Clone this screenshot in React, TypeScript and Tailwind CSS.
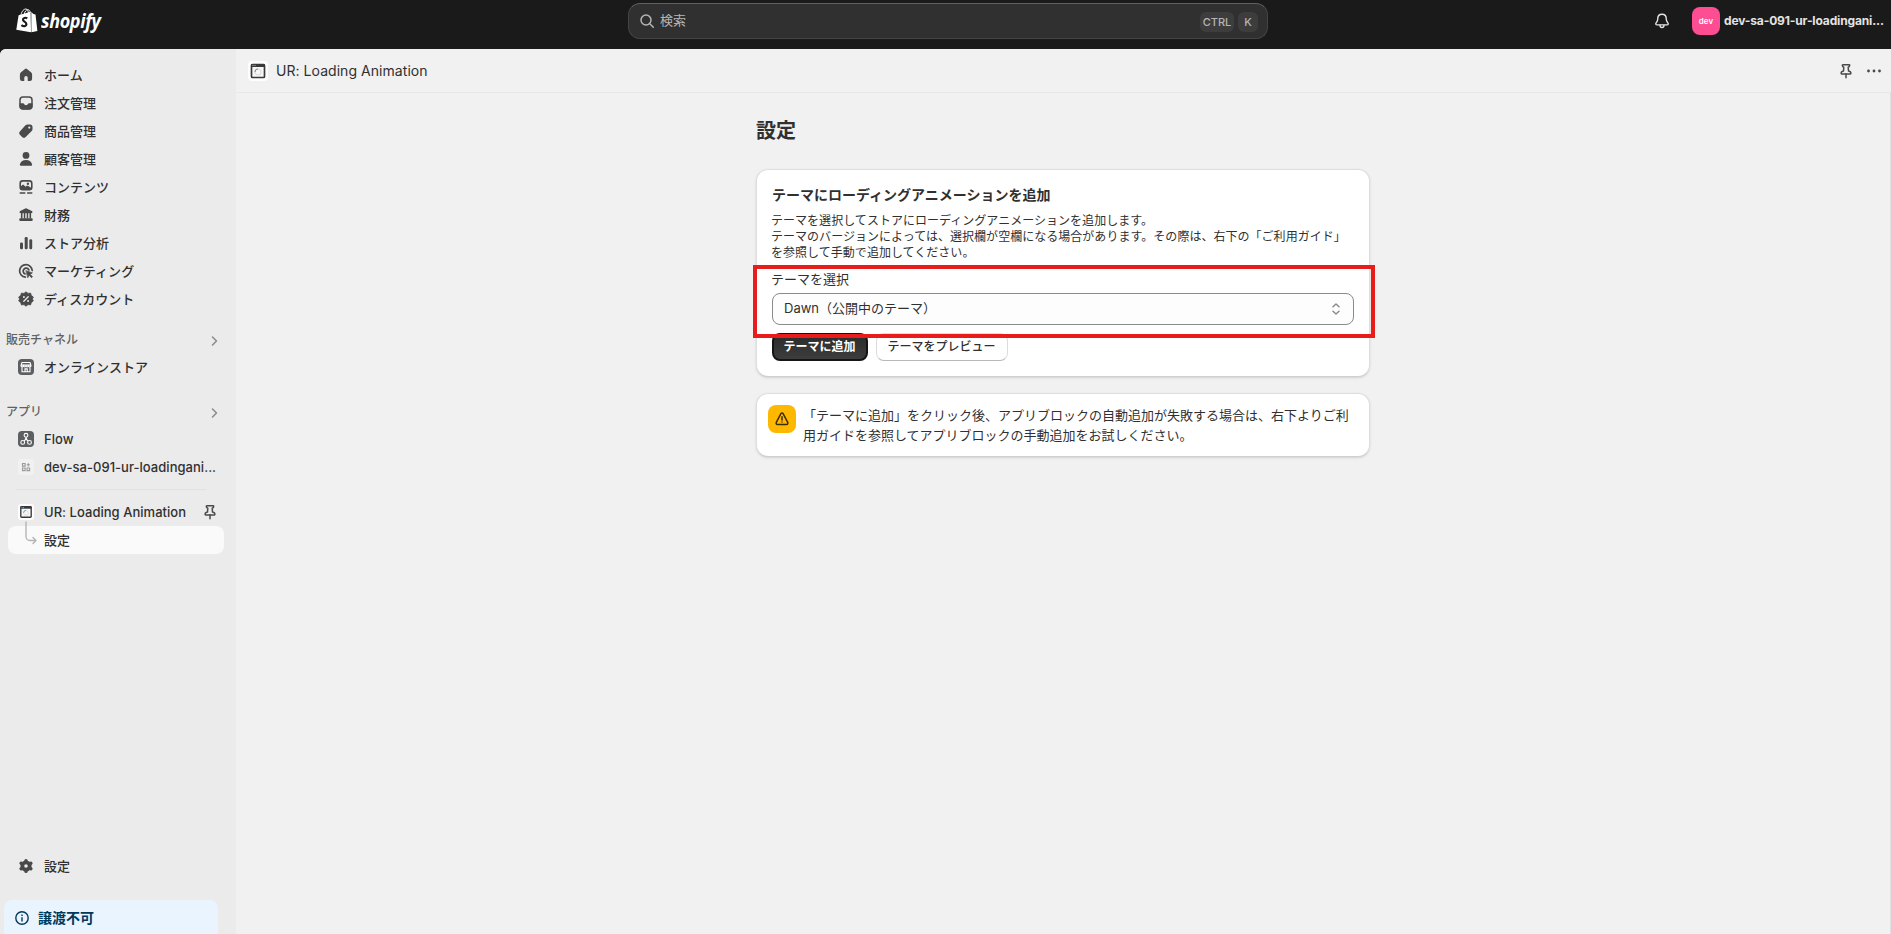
import type { ReactNode } from "react";

type NavItemProps = {
    icon: ReactNode;
    label: string;
    trailing?: ReactNode;
};

type SectionLabelProps = {
    label: string;
    className?: string;
};

const HomeIcon = () => (
    <svg viewBox="0 0 16 16" className="size-4" fill="#4a4a4a">
        <path d="M7 1.9a1.6 1.6 0 0 1 2 0l4 3.3c.7.6 1.1 1.4 1.1 2.300v4.300a2.200 2.200 0 0 1-2.200 2.200h-1.600a.6.6 0 0 1-.6-.6v-2.600a1.700 1.700 0 0 0-3.400 0v2.600a.6.6 0 0 1-.6.6H4.100a2.200 2.200 0 0 1-2.200-2.200V7.500c0-.9.4-1.700 1.100-2.300z" />
    </svg>
);

const OrdersIcon = () => (
    <svg viewBox="0 0 16 16" className="size-4">
        <rect x="2" y="2" width="12" height="12" rx="3" fill="none" stroke="#4a4a4a" strokeWidth="1.500" />
        <path d="M1.500 8.300h3.600c.5 0 .8.300 1 .7.300.7 1 1.200 1.900 1.200s1.600-.5 1.900-1.200c.2-.4.500-.7 1-.7h3.600V11a3.400 3.400 0 0 1-3.400 3.400H4.900A3.400 3.400 0 0 1 1.500 11z" fill="#4a4a4a" />
    </svg>
);

const TagIcon = () => (
    <svg viewBox="0 0 16 16" className="size-4" fill="#4a4a4a" fillRule="evenodd">
        <path d="M7.700 2.100c.5-.5 1.100-.7 1.800-.7h2.700c1.300 0 2.300 1 2.300 2.300v2.500c0 .7-.3 1.300-.8 1.800l-6 5.900a2.600 2.600 0 0 1-3.600 0l-2-2a2.600 2.600 0 0 1 0-3.700zM11.300 5.700a1.100 1.100 0 1 0 0-2.200 1.100 1.100 0 0 0 0 2.200z" />
    </svg>
);

const CustomerIcon = () => (
    <svg viewBox="0 0 16 16" className="size-4" fill="#4a4a4a">
        <circle cx="8" cy="4.400" r="3.400" />
        <path d="M1.900 13.200C2.600 10.500 5 9 8 9s5.400 1.500 6.100 4.200c.2.800-.3 1.500-1.100 1.500H3c-.8 0-1.300-.7-1.100-1.500z" />
    </svg>
);

const ContentIcon = () => (
    <svg viewBox="0 0 16 16" className="size-4">
        <rect x="2.200" y="1.900" width="11.600" height="8.900" rx="2.500" fill="none" stroke="#4a4a4a" strokeWidth="1.600" />
        <path d="M2.200 7.800l1.900-1.600c.6-.5 1.400-.5 1.900 0l1.700 1.500.7-.6c.6-.5 1.400-.5 2 0l3.400 2.100-1.500 1.800H3.700L2.200 9.500z" fill="#4a4a4a" />
        <circle cx="9.900" cy="4.800" r="1.200" fill="#4a4a4a" />
        <path d="M2.200 13.900h4.600M9.600 13.900h4.200" stroke="#4a4a4a" strokeWidth="1.500" strokeLinecap="round" />
    </svg>
);

const FinanceIcon = () => (
    <svg viewBox="0 0 16 16" className="size-4" fill="#4a4a4a">
        <path d="M7.300 1.400a1.500 1.500 0 0 1 1.400 0l5.100 2.500c.4.200.7.600.7 1.100 0 .7-.5 1.200-1.200 1.200H2.700c-.7 0-1.200-.5-1.200-1.200 0-.5.300-.9.700-1.100z" />
        <path d="M2.900 6h1.600v5.500H2.900zM5.800 6h1.500v5.500H5.800zM8.700 6h1.500v5.500H8.700zM11.500 6h1.600v5.500h-1.600z" />
        <rect x="1.300" y="11.300" width="13.400" height="2.600" rx="1" />
    </svg>
);

const AnalyticsIcon = () => (
    <svg viewBox="0 0 16 16" className="size-4" fill="#4a4a4a">
        <rect x="2" y="7.500" width="3" height="6.700" rx="1.200" />
        <rect x="6.700" y="2" width="3" height="12.200" rx="1.200" />
        <rect x="11.300" y="4.300" width="2.900" height="9.900" rx="1.200" />
    </svg>
);

const MarketingIcon = () => (
    <svg viewBox="0 0 16 16" className="size-4" fill="none" stroke="#4a4a4a" strokeWidth="1.700" strokeLinecap="round">
        <path d="M14.200 7.500A6.300 6.300 0 1 0 7.300 14.200" />
        <path d="M10.900 6.900A3 3 0 1 0 7 10.900" />
        <path d="M8.200 7.700l6.200 2.200-2.300 1.300 2.400 2.500-1 1-2.400-2.400-1.200 2.200z" fill="#4a4a4a" strokeWidth=".7" strokeLinejoin="round" />
    </svg>
);

const DiscountIcon = () => (
    <svg viewBox="0 0 16 16" className="size-4">
        <path d="M8 .8l2 1.600 2.600-.3.700 2.400 2 1.500L14.400 8l.9 2-2 1.500-.7 2.400-2.600-.3-2 1.600-2-1.600-2.600.3-.7-2.400-2-1.500.9-2-.9-2 2-1.500.7-2.400 2.600.3z" fill="#4a4a4a" stroke="#4a4a4a" strokeWidth=".8" strokeLinejoin="round" />
        <path d="M10.200 5.800l-4.400 4.400" stroke="#ebebeb" strokeWidth="1.300" strokeLinecap="round" />
        <circle cx="5.900" cy="6" r=".95" fill="#ebebeb" />
        <circle cx="10.100" cy="10" r=".95" fill="#ebebeb" />
    </svg>
);

const StoreIcon = () => (
    <svg viewBox="0 0 16 16" className="size-4">
        <rect width="16" height="16" rx="4" fill="#5c5f62" />
        <path d="M4 3.500h8l1 3.200c0 1.400-2.200 1.600-2.600.2-.4 1.400-2.100 1.400-2.400 0-.4 1.400-2.100 1.400-2.400 0C5.100 8.300 3 8.100 3 6.700zM4 8.400v4.300h8V8.400M7 12.500v-2.600h2.200v2.600M3.400 6.100h9.200" fill="none" stroke="#fff" strokeWidth="1.100" />
    </svg>
);

const FlowIcon = () => (
    <svg viewBox="0 0 16 16" className="size-4">
        <rect width="16" height="16" rx="4" fill="#5c5f62" />
        <g fill="none" stroke="#fff" strokeWidth="1.100">
            <circle cx="8" cy="4.300" r="1.900" />
            <circle cx="4.700" cy="11.400" r="1.900" />
            <circle cx="11.500" cy="11.400" r="1.900" />
            <path d="M7.900 6.200c0 1.800-.4 2.700-1.800 3.800M8.100 6.200c0 1.800.5 2.700 1.900 3.800" />
        </g>
    </svg>
);

const DevAppIcon = () => (
    <svg viewBox="0 0 16 16" className="size-4">
        <rect width="16" height="16" rx="3" fill="#f1f1f1" />
        <g fill="none" stroke="#9a9a9a" strokeWidth="1.100">
            <path d="M4.500 4.500h2.600v2.600H4.500zM4.500 9h2.600v2.600H4.500zM9 9h2.600v2.600H9zM8.700 5.800h3.200M10.300 4.200v3.200" />
        </g>
    </svg>
);

const WindowIcon = ({ className }: { className: string }) => (
    <svg viewBox="0 0 20 20" className={className}>
        <rect width="20" height="20" rx="4" fill="#fdfdfd" />
        <rect x="3.500" y="3.500" width="13" height="13" rx="1" fill="#f7f7f7" stroke="#3a3a3a" strokeWidth="1.700" />
        <path d="M3 4.600h14" stroke="#3a3a3a" strokeWidth="2.600" />
        <path d="M4.500 4.400h1M6.500 4.400h1" stroke="#ddd" strokeWidth=".8" />
        <circle cx="10" cy="11" r="3" fill="none" stroke="#ddd" strokeWidth="1.200" />
        <path d="M7 11a3 3 0 0 1 3-3" fill="none" stroke="#4aa8dc" strokeWidth="1.200" />
    </svg>
);

const PinIcon = () => (
    <svg viewBox="0 0 16 16" className="size-4" fill="none" stroke="#4a4a4a" strokeWidth="1.500" strokeLinecap="round" strokeLinejoin="round">
        <path d="M4.800 1.700h6.400c.3 0 .5.300.5.600 0 1-.6 1.700-1.500 2l.3 3.600c1.400.3 2.400 1.200 2.400 2.400 0 .4-.3.600-.6.600H3.700c-.3 0-.6-.2-.6-.6 0-1.200 1-2.100 2.400-2.400l.3-3.600c-.9-.3-1.500-1-1.500-2 0-.3.200-.6.500-.6z" />
        <path d="M8 11v3.800" />
    </svg>
);

const GearIcon = () => (
    <svg viewBox="0 0 16 16" className="size-4">
        <circle cx="8" cy="8" r="3.700" fill="none" stroke="#4a4a4a" strokeWidth="3.800" />
        <g stroke="#4a4a4a" strokeWidth="3.400" strokeLinecap="round">
            <path d="M8 2.600v1.300M8 12.100v1.300M3.100 5.200l1.300.7M11.600 10.100l1.300.7M3.100 10.800l1.300-.7M11.600 5.900l1.300-.7" />
        </g>
    </svg>
);

const ChevronIcon = () => (
    <svg viewBox="0 0 8 12" className="w-2 h-3" fill="none" stroke="#8a8a8a" strokeWidth="1.500" strokeLinecap="round" strokeLinejoin="round">
        <path d="M1.500 2l4 4-4 4" />
    </svg>
);

const ShopifyLogo = () => (
    <div className="flex items-center gap-[3px]">
        <svg viewBox="0 0 22 25" className="w-[22px] h-[25px]">
            <path d="M2.600 7.300L14.600 3.700l.4 20.600L.3 21.800z" fill="#fff" />
            <path d="M15.300 4l2.100 2.100 2.100.3 1.900 16.500-6 1.400z" fill="#fff" />
            <path d="M5 6.800C5.900 3 8 .9 9.900 1c1.500.1 2.400 2 2.500 4.200M8.300 6c.5-2.400 1.900-4.200 3.500-4.300 1.500 0 2.300 1.500 2.500 2.800" fill="none" stroke="#fff" strokeWidth="1" />
            <path d="M11.300 10.200c-2-.9-4.300-.3-4.300 1.500 0 2 3.400 2 3.400 4.500 0 2.300-2.700 2.700-5 1" fill="none" stroke="#1a1a1a" strokeWidth="2.200" />
        </svg>
        <span className="inline-block origin-left scale-x-[0.900] font-['Open_Sans',sans-serif] text-[20px] leading-6 font-bold italic tracking-[-0.4px] text-white">
            shopify
        </span>
    </div>
);

const NavItem = ({ icon, label, trailing }: NavItemProps) => (
    <li className="flex h-7 items-center pl-[18px] pr-2.5">
        {icon}
        <span className="ml-2.5 flex-1 whitespace-nowrap pt-0.5 font-medium tracking-[0.03px]">{label}</span>
        {trailing}
    </li>
);

const SectionLabel = ({ label, className }: SectionLabelProps) => (
    <div className={`flex h-7 items-center justify-between pl-1.5 pr-[17px] ${className ?? ""}`}>
        <span className="pb-[3px] text-[12px] font-medium text-[#616161]">{label}</span>
        <ChevronIcon />
    </div>
);

const mainNav: NavItemProps[] = [
    { label: "ホーム", icon: <HomeIcon /> },
    { label: "注文管理", icon: <OrdersIcon /> },
    { label: "商品管理", icon: <TagIcon /> },
    { label: "顧客管理", icon: <CustomerIcon /> },
    { label: "コンテンツ", icon: <ContentIcon /> },
    { label: "財務", icon: <FinanceIcon /> },
    { label: "ストア分析", icon: <AnalyticsIcon /> },
    { label: "マーケティング", icon: <MarketingIcon /> },
    { label: "ディスカウント", icon: <DiscountIcon /> },
];

const TopBar = () => (
    <header className="grid h-[49px] shrink-0 grid-cols-[628px_640px_1fr] bg-[#1a1a1a]">
        <div className="pl-4 pt-2">
            <ShopifyLogo />
        </div>
        <div className="mt-[3px] flex h-9 items-center rounded-xl border border-[#444] border-t-[#616161] bg-[#303030] pl-2 pr-[9px]">
            <svg viewBox="0 0 16 16" className="ml-0.5 size-4" fill="none" stroke="#b5b5b5" strokeWidth="1.500" strokeLinecap="round">
                <circle cx="7" cy="7" r="5" />
                <path d="M10.800 10.800l3.500 3.500" />
            </svg>
            <span className="ml-[5px] flex-1 text-[13px] text-[#b5b5b5]">検索</span>
            <kbd className="mt-0.5 flex h-5 w-[34px] items-center justify-center rounded-md bg-[#3d3d3d] font-[Inter,sans-serif] text-[11px] font-medium text-[#b5b5b5]">
                CTRL
            </kbd>
            <kbd className="ml-1 mt-0.5 flex h-5 w-5 items-center justify-center rounded-md bg-[#3d3d3d] font-[Inter,sans-serif] text-[11px] font-medium text-[#b5b5b5]">
                K
            </kbd>
        </div>
        <div className="flex h-[42px] items-center justify-end pr-2">
            <svg viewBox="0 0 16 16" className="mr-[22px] size-4" fill="none" stroke="#e3e3e3" strokeWidth="1.400" strokeLinecap="round" strokeLinejoin="round">
                <path d="M8 1.200c-2.500 0-4.200 1.900-4.200 4.300 0 2-.5 3-1.400 3.900-1.100 1.100-.8 2.500.7 2.500h9.800c1.500 0 1.800-1.400.7-2.500-.9-.9-1.400-1.900-1.400-3.900 0-2.400-1.700-4.300-4.200-4.300z" />
                <path d="M6 12.200c0 3 4 3 4 0" />
            </svg>
            <div className="flex size-7 items-center justify-center rounded-lg bg-[#ff4d94] text-[8px] font-semibold text-white">dev</div>
            <span className="ml-1 w-[159px] whitespace-nowrap text-[12px] font-bold tracking-[-0.14px] text-[#e3e3e3]">dev-sa-091-ur-loadingani...</span>
        </div>
    </header>
);

const Sidebar = () => (
    <nav className="flex w-[236px] shrink-0 flex-col bg-[#ebebeb] pt-3 text-[13px] text-[#303030]">
        <ul>
            {mainNav.map(item => (
                <NavItem key={item.label} {...item} />
            ))}
        </ul>
        <SectionLabel label="販売チャネル" className="mt-[14px]" />
        <ul className="-mt-0.5">
            <NavItem icon={<StoreIcon />} label="オンラインストア" />
        </ul>
        <SectionLabel label="アプリ" className="mt-[18px]" />
        <ul className="-mt-0.5">
            <NavItem icon={<FlowIcon />} label="Flow" />
            <NavItem icon={<DevAppIcon />} label="dev-sa-091-ur-loadingani..." />
        </ul>
        <hr className="ml-4 mr-[30px] mt-2 mb-2 border-[#e1e1e1]" />
        <div className="relative">
            <NavItem icon={<WindowIcon className="size-4" />} label="UR: Loading Animation" trailing={<div className="mr-2"><PinIcon /></div>} />
            <div className="ml-2 mr-3 flex h-7 items-center rounded-lg bg-[#fafafa] pl-9 pt-px font-medium">設定</div>
            <svg viewBox="0 0 14 26" className="absolute left-6 top-[23px] h-[26px] w-[14px]" fill="none" stroke="#b5b5b5" strokeWidth="1.400" strokeLinecap="round" strokeLinejoin="round">
                <path d="M2 1v14.500a4 4 0 0 0 4 4h6M9 16.500l3 3-3 3" />
            </svg>
        </div>
        <div className="mt-auto">
            <ul>
                <NavItem icon={<GearIcon />} label="設定" />
            </ul>
            <div className="ml-1 mr-[18px] mt-5 flex h-[34px] items-center rounded-t-lg bg-[#eaf4ff] pl-[11px] text-[14px] font-semibold text-[#003a5a]">
                <svg viewBox="0 0 14 14" className="mr-[9px] mt-0.5 size-[14px]" fill="none" stroke="#003a5a" strokeWidth="1.400">
                    <circle cx="7" cy="7" r="6.200" />
                    <path d="M7 6.200v4.200M7 3.500V5" />
                </svg>
                譲渡不可
            </div>
        </div>
    </nav>
);

const ThemeCard = () => (
    <section className="relative h-[208px] rounded-xl border border-[#dedede] border-b-[#cfcfcf] bg-white px-[15px] pt-[15px] shadow-sm">
        <h2 className="text-[14px] leading-5 font-semibold">テーマにローディングアニメーションを追加</h2>
        <p className="mt-2 -ml-px whitespace-nowrap text-[12px] leading-4 tracking-[0.03px]">
            テーマを選択してストアにローディングアニメーションを追加します。
            <br />
            テーマのバージョンによっては、選択欄が空欄になる場合があります。その際は、右下の「ご利用ガイド」
            <br />
            を参照して手動で追加してください。
        </p>
        <label htmlFor="theme" className="mt-2 -ml-px block text-[13px] leading-5">テーマを選択</label>
        <button
            id="theme"
            type="button"
            className="mt-1 flex h-8 w-full items-center justify-between rounded-lg border border-[#8a8a8a] bg-[#fdfdfd] pl-[11px] pr-[13px] text-[13px]"
        >
            Dawn（公開中のテーマ）
            <svg viewBox="0 0 8 12" className="h-3 w-2" fill="none" stroke="#8a8a8a" strokeWidth="1.500" strokeLinecap="round" strokeLinejoin="round">
                <path d="M1 3.700l3-2.700 3 2.700M1 8.300l3 2.700 3-2.700" />
            </svg>
        </button>
        <div className="mt-2 flex gap-2 text-[12px] font-semibold">
            <button
                type="button"
                className="flex h-7 w-24 items-center justify-center rounded-lg border-2 border-[#151515] bg-linear-to-b from-[#2b2b2b] to-[#3d3d3d] pb-px pr-px text-white"
            >
                テーマに追加
            </button>
            <button
                type="button"
                className="flex h-7 w-[132px] items-center justify-center rounded-lg border border-[#dcdcdc] border-b-[#b8b8b8] bg-white pb-px pr-px font-medium"
            >
                テーマをプレビュー
            </button>
        </div>
        {/* highlight frame around the theme selector */}
        <div className="absolute -left-1 -right-1.5 top-[95px] h-[73px] border-4 border-[#e91c1c]" />
    </section>
);

const WarningCard = () => (
    <section className="mt-4 flex h-[64px] rounded-xl border border-[#dedede] border-b-[#cfcfcf] bg-white pl-[11px] pt-[11px] shadow-sm">
        <div className="flex size-7 shrink-0 items-center justify-center rounded-lg bg-[#ffb800]">
            <svg viewBox="0 0 16 16" className="size-4" fill="none" stroke="#3d2a00" strokeWidth="1.500" strokeLinecap="round" strokeLinejoin="round">
                <path d="M6.900 2.700a1.300 1.300 0 0 1 2.200 0l4.600 8.600c.5 1-.1 2.200-1.200 2.200h-9c-1.100 0-1.700-1.200-1.200-2.200z" />
                <path d="M8 5.800v3.100M8 11v.1" />
            </svg>
        </div>
        <p className="ml-[7px] whitespace-nowrap text-[13px] leading-5">
            「テーマに追加」をクリック後、アプリブロックの自動追加が失敗する場合は、右下よりご利
            <br />
            用ガイドを参照してアプリブロックの手動追加をお試しください。
        </p>
    </section>
);

export default function App() {
    return (
        <div className="flex h-[934px] w-[1891px] flex-col overflow-hidden bg-[#1a1a1a] font-[Inter,'Noto_Sans_CJK_JP',sans-serif] text-[#303030]">
            <TopBar />
            <div className="flex min-h-0 flex-1 overflow-hidden rounded-tl-md bg-[#f1f1f1]">
                <Sidebar />
                <main className="flex flex-1 flex-col">
                    <div className="flex h-11 items-center border-b border-[#e8e8e8] pl-3 pr-[9px]">
                        <WindowIcon className="size-5" />
                        <h1 className="ml-2 flex-1 text-[14px] tracking-[0.05px] text-[#303030]">UR: Loading Animation</h1>
                        <PinIcon />
                        <svg viewBox="0 0 16 16" className="ml-3 size-4" fill="#4a4a4a">
                            <circle cx="2.500" cy="8" r="1.400" />
                            <circle cx="8" cy="8" r="1.400" />
                            <circle cx="13.500" cy="8" r="1.400" />
                        </svg>
                    </div>
                    <div className="flex-1 border-r border-[#e0e0e0] pl-[520px]">
                        <div className="w-[614px]">
                            <h2 className="pt-6 text-[20px] leading-7 font-semibold">設定</h2>
                            <div className="mt-6">
                                <ThemeCard />
                                <WarningCard />
                            </div>
                        </div>
                    </div>
                </main>
            </div>
        </div>
    );
}
